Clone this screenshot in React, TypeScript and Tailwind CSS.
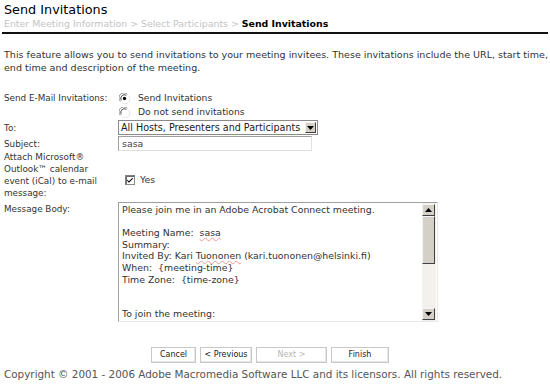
import React from "react";

const font = { fontFamily: '"DejaVu Sans", Verdana, sans-serif' };

function Radio({ checked }: { checked: boolean }) {
  return (
    <svg width="11" height="11" viewBox="0 0 12 12" className="shrink-0">
      <circle cx="6" cy="6" r="5.5" fill="#ffffff" />
      <path d="M1.5 9 A5 5 0 0 1 9 1.5" stroke="#808080" strokeWidth="1" fill="none" />
      <path d="M3 10.3 A5 5 0 0 0 10.3 3" stroke="#e0e0e0" strokeWidth="1" fill="none" />
      <path d="M2.5 8 A4 4 0 0 1 8 2.5" stroke="#404040" strokeWidth="1" fill="none" />
      {checked && <circle cx="6" cy="6" r="1.8" fill="#000" />}
    </svg>
  );
}

function Check() {
  return (
    <svg width="10" height="10" viewBox="0 0 11 11" className="shrink-0">
      <rect x="0.5" y="0.5" width="10" height="10" fill="#fff" stroke="#808080" />
      <path d="M1.5 10 V1.5 H10" stroke="#404040" fill="none" />
      <path d="M2.5 5 L4.3 7 L8.5 2.8 L8.5 4.3 L4.3 8.5 L2.5 6.5 Z" fill="#000" />
    </svg>
  );
}

function ArrowBtn({ down }: { down?: boolean }) {
  return (
    <div className="w-[13px] h-[12px] bg-[#d4d0c8] border border-t-[#f4f4f4] border-l-[#f4f4f4] border-r-[#404040] border-b-[#404040] flex items-center justify-center">
      <svg width="7" height="4" viewBox="0 0 7 4">
        {down ? <path d="M0 0 H7 L3.5 4 Z" fill="#000" /> : <path d="M0 4 H7 L3.5 0 Z" fill="#000" />}
      </svg>
    </div>
  );
}

export default function App() {
  const lines = [
    "Please join me in an Adobe Acrobat Connect meeting.",
    "",
    "MEETING",
    "Summary:",
    "INVITED",
    "When:  {meeting-time}",
    "Time Zone:  {time-zone}",
    "",
    "",
    "To join the meeting:",
  ];
  return (
    <div className="w-[550px] h-[388px] bg-white text-[#333] overflow-hidden" style={font}>
      <div className="pl-[4px] pt-[3px]">
        <div className="text-[12.8px] leading-[14px] text-black">Send Invitations</div>
        <div className="text-[9.4px] leading-[11px] text-[#c4c4c4] mt-[1px] whitespace-nowrap">
          Enter Meeting Information &gt; Select Participants &gt;{" "}
          <span className="text-black font-bold">Send Invitations</span>
        </div>
      </div>
      <div className="h-[2px] bg-[#111] mx-[2px] mt-[3px]" />
      <div className="pl-[4px] pr-[1px] mt-[14px] text-[9.55px] leading-[13px]">
        This feature allows you to send invitations to your meeting invitees. These invitations include the URL, start time,
        <br />
        end time and description of the meeting.
      </div>

      <div className="pl-[4px] mt-[17px] text-[8.8px] leading-[12px]">
        {/* Send E-Mail Invitations */}
        <div className="flex">
          <div className="w-[114px] h-[14px] flex items-center">Send E-Mail Invitations:</div>
          <div className="flex flex-col">
            <div className="flex items-center h-[14px] pl-[1px]">
              <Radio checked />
              <span className="ml-[8px] text-[9.2px]">Send Invitations</span>
            </div>
            <div className="flex items-center h-[14px] pl-[1px]">
              <Radio checked={false} />
              <span className="ml-[8px] text-[9.2px]">Do not send invitations</span>
            </div>
          </div>
        </div>
        {/* To */}
        <div className="flex items-center mt-[1px]">
          <div className="w-[114px]">To:</div>
          <div className="w-[200px] h-[15px] border border-[#8a8a8a] flex items-center justify-between pl-[2px] pr-[1px]">
            <span className="text-[9.6px] leading-[13px] text-[#222] whitespace-nowrap">All Hosts, Presenters and Participants</span>
            <div className="w-[11px] h-[11px] bg-[#d4d0c8] border border-t-[#f4f4f4] border-l-[#f4f4f4] border-r-[#404040] border-b-[#404040] flex items-center justify-center">
              <svg width="7" height="4" viewBox="0 0 7 4"><path d="M0 0 H7 L3.5 4 Z" fill="#000" /></svg>
            </div>
          </div>
        </div>
        {/* Subject */}
        <div className="flex items-center mt-[1px]">
          <div className="w-[114px]">Subject:</div>
          <div className="w-[194px] h-[15px] border border-t-[#a0a0a0] border-l-[#a0a0a0] border-r-[#e0e0e0] border-b-[#e0e0e0] pl-[3px] flex items-center">
            <span className="text-[9.4px] text-[#444]">sasa</span>
          </div>
        </div>
        {/* Attach */}
        <div className="flex items-center">
          <div className="w-[114px] leading-[12px]">
            Attach Microsoft®
            <br />
            Outlook™ calendar
            <br />
            event (iCal) to e-mail
            <br />
            message:
          </div>
          <div className="flex items-center pl-[7px] mt-[10px]">
            <Check />
            <span className="ml-[5px] text-[9.4px]">Yes</span>
          </div>
        </div>
        {/* Message Body */}
        <div className="flex mt-[3px]">
          <div className="w-[114px] pt-[1px]">Message Body:</div>
          <div className="w-[320px] h-[120px] border border-t-[#a0a0a0] border-l-[#a0a0a0] border-r-[#e8e8e8] border-b-[#e8e8e8] flex overflow-hidden">
            <div className="flex-1 pl-[3px] pt-[1px] text-[9.4px] leading-[11.6px] text-[#333]">
              {lines.map((l, i) => {
                if (l === "MEETING")
                  return (
                    <div key={i} className="h-[11.6px] whitespace-pre">
                      Meeting Name:  <span className="underline decoration-wavy decoration-[#e99] decoration-1 underline-offset-1">sasa</span>
                    </div>
                  );
                if (l === "INVITED")
                  return (
                    <div key={i} className="h-[11.6px] whitespace-pre">
                      Invited By: Kari <span className="underline decoration-wavy decoration-[#e99] decoration-1 underline-offset-1">Tuononen</span> (kari.tuononen@helsinki.fi)
                    </div>
                  );
                return (
                  <div key={i} className="h-[11.6px] whitespace-pre">
                    {l}
                  </div>
                );
              })}
            </div>
            <div className="w-[14px] flex flex-col bg-[#f3f1ec] pt-[1px] pb-[1px] mr-[1px]">
              <ArrowBtn />
              <div className="h-[48px] bg-[#d4d0c8] border border-t-[#f4f4f4] border-l-[#f4f4f4] border-r-[#404040] border-b-[#404040] w-[13px]" />
              <div className="flex-1" />
              <ArrowBtn down />
            </div>
          </div>
        </div>
      </div>

      {/* Buttons */}
      <div className="flex ml-[151px] mt-[25px] gap-[4px] text-[8px]">
        {[
          { t: "Cancel", w: 45, d: false },
          { t: "< Previous", w: 52, d: false },
          { t: "Next >", w: 71, d: true },
          { t: "Finish", w: 58, d: false },
        ].map((b) => (
          <div
            key={b.t}
            className={
              "h-[16px] flex items-center justify-center whitespace-nowrap bg-white border border-[#c8c8c8] shadow-[inset_-1px_-1px_0_#e6e6e6] " +
              (b.d ? "text-[#b8b8b8]" : "text-[#222]")
            }
            style={{ width: b.w }}
          >
            {b.t}
          </div>
        ))}
      </div>

      <div className="pl-[4px] mt-[5px] text-[10.4px] leading-[12px] text-[#555] whitespace-nowrap">
        Copyright © 2001 - 2006 Adobe Macromedia Software LLC and its licensors. All rights reserved.
      </div>
    </div>
  );
}
